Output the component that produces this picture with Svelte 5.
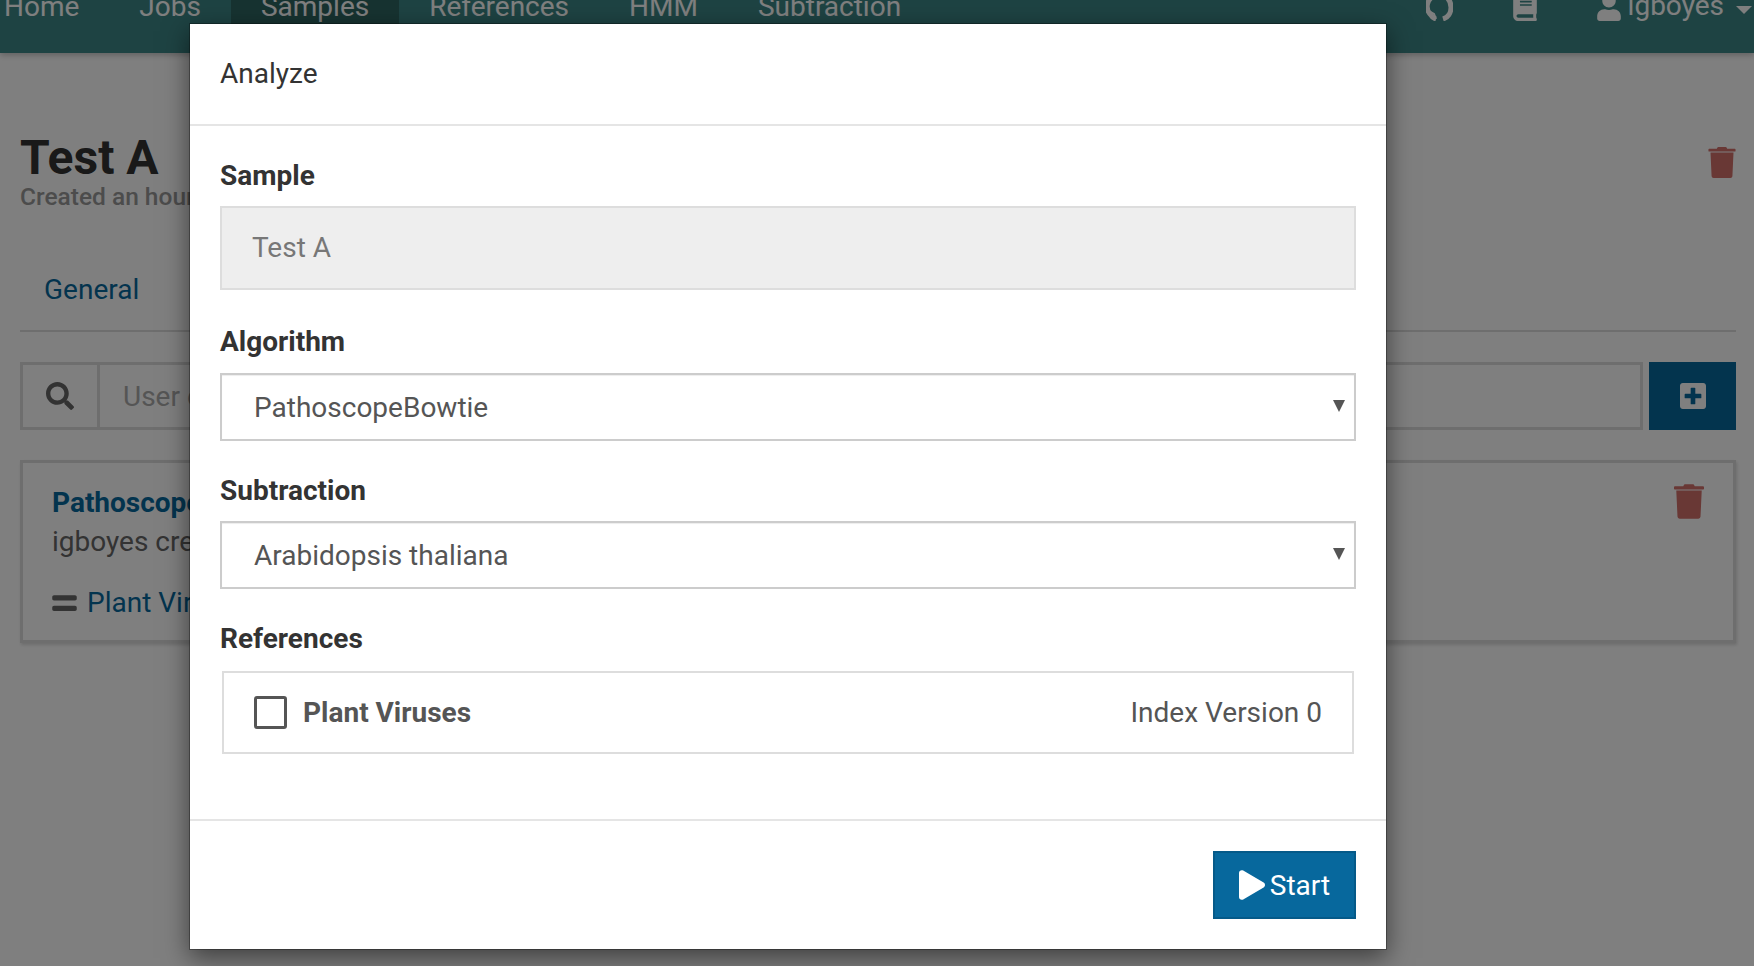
<script>
    const navLinks = ["Home", "Jobs", "Samples", "References", "HMM", "Subtraction"]
    const algorithms = ["PathoscopeBowtie", "NuVs"]
    const subtractions = ["Arabidopsis thaliana"]

    const trash = "M165 0h118c10 0 18 6 21 16l5 14h123c9 0 16 7 16 16v14c0 9-7 16-16 16H16C7 76 0 69 0 60V46c0-9 7-16 16-16h123l5-14c3-10 11-16 21-16zM34 92h380l-18 388c-1 18-16 32-34 32H86c-18 0-33-14-34-32z"
    const search = "M505 442.7L405.3 343c-4.5-4.5-10.6-7-17-7H372c27.6-35.3 44-79.7 44-128C416 93.1 322.9 0 208 0S0 93.1 0 208s93.1 208 208 208c48.3 0 92.7-16.4 128-44v16.3c0 6.4 2.5 12.5 7 17l99.7 99.7c9.4 9.4 24.6 9.4 33.9 0l28.3-28.3c9.4-9.4 9.4-24.6.1-34zM208 336c-70.7 0-128-57.2-128-128 0-70.7 57.2-128 128-128 70.7 0 128 57.2 128 128 0 70.7-57.2 128-128 128z"
    const plusSquare = "M400 32H48C21.5 32 0 53.5 0 80v352c0 26.5 21.5 48 48 48h352c26.5 0 48-21.5 48-48V80c0-26.5-21.5-48-48-48zm-32 252c0 6.6-5.4 12-12 12h-92v92c0 6.6-5.4 12-12 12h-56c-6.6 0-12-5.4-12-12v-92H92c-6.6 0-12-5.4-12-12v-56c0-6.6 5.4-12 12-12h92v-92c0-6.6 5.4-12 12-12h56c6.6 0 12 5.4 12 12v92h92c6.6 0 12 5.4 12 12v56z"
    const play = "M424.4 214.7L72.4 6.6C43.8-10.3 0 6.1 0 47.9V464c0 37.5 40.7 60.1 72.4 41.3l352-208c31.4-18.5 31.5-64.1 0-82.6z"
    const equals = "M416 304H32c-17.67 0-32 14.33-32 32v32c0 17.67 14.33 32 32 32h384c17.67 0 32-14.33 32-32v-32c0-17.67-14.33-32-32-32zm0-192H32c-17.67 0-32 14.33-32 32v32c0 17.67 14.33 32 32 32h384c17.67 0 32-14.33 32-32v-32c0-17.67-14.33-32-32-32z"
    const user = "M224 256c70.7 0 128-57.3 128-128S294.7 0 224 0 96 57.3 96 128s57.3 128 128 128zm89.6 32h-16.7c-22.2 10.2-46.9 16-72.9 16s-50.6-5.8-72.9-16h-16.7C60.2 288 0 348.2 0 422.4V464c0 26.5 21.5 48 48 48h352c26.5 0 48-21.5 48-48v-41.6c0-74.2-60.2-134.4-134.4-134.4z"
    const book = "M448 360V24c0-13.3-10.7-24-24-24H96C43 0 0 43 0 96v320c0 53 43 96 96 96h328c13.3 0 24-10.7 24-24v-16c0-7.5-3.5-14.3-8.9-18.7-4.2-15.4-4.2-59.3 0-74.7 5.4-4.3 8.9-11.1 8.9-18.6zM128 134c0-3.3 2.7-6 6-6h212c3.3 0 6 2.7 6 6v20c0 3.3-2.7 6-6 6H134c-3.3 0-6-2.7-6-6v-20zm0 64c0-3.3 2.7-6 6-6h212c3.3 0 6 2.7 6 6v20c0 3.3-2.7 6-6 6H134c-3.3 0-6-2.7-6-6v-20zm253.4 250H96c-17.7 0-32-14.3-32-32 0-17.6 14.4-32 32-32h285.4c-1.9 17.1-1.9 46.9 0 64z"
</script>

<div class="page">
    <nav class="navbar">
        <ul class="links">
            {#each navLinks as link}
                <li class:active={link === "Samples"}>{link}</li>
            {/each}
        </ul>
        <div class="nav-right">
            <svg class="github" viewBox="0 0 27 27" aria-hidden="true">
                <path d="M8 2A11.5 11.5 0 0 0 4 20C5.5 22.500 8 24.500 10 25M17 25C22 23.500 25 19 25 13.500C25 8 22 4 19 2" fill="none" stroke="currentColor" stroke-width="5" />
                <path d="M3 17L8 20L10 25" fill="none" stroke="currentColor" stroke-width="2" />
            </svg>
            <svg class="book" viewBox="0 0 448 512" aria-hidden="true"><path d={book} /></svg>
            <svg class="user" viewBox="0 0 448 512" aria-hidden="true"><path d={user} /></svg>
            <span class="username">igboyes</span>
            <span class="caret"></span>
        </div>
    </nav>

    <main class="content">
        <div class="title-row">
            <div>
                <h1>Test A</h1>
                <p class="created">Created an hour ago by igboyes</p>
            </div>
            <svg class="trash title-trash" viewBox="0 0 448 512" aria-hidden="true"><path d={trash} /></svg>
        </div>

        <div class="tabs">
            <span>General</span>
            <span>Quality</span>
            <span>Analyses</span>
        </div>

        <div class="toolbar">
            <div class="search-group">
                <span class="search-addon">
                    <svg viewBox="0 0 512 512" aria-hidden="true"><path d={search} /></svg>
                </span>
                <input class="search-input" placeholder="User or reference" />
            </div>
            <button class="add-btn" aria-label="Create">
                <svg viewBox="0 0 448 512" aria-hidden="true"><path d={plusSquare} /></svg>
            </button>
        </div>

        <div class="card">
            <div>
                <a class="card-title" href="#analysis">Pathoscope (Bowtie2)</a>
                <div class="card-meta">igboyes created an hour ago</div>
                <div class="card-ref">
                    <svg viewBox="0 0 448 512" aria-hidden="true"><path d={equals} /></svg>
                    <span>Plant Viruses</span>
                </div>
            </div>
            <svg class="trash card-trash" viewBox="0 0 448 512" aria-hidden="true"><path d={trash} /></svg>
        </div>
    </main>

    <div class="backdrop"></div>

    <div class="modal">
        <header class="modal-header">Analyze</header>

        <div class="modal-body">
            <label for="sample">Sample</label>
            <input id="sample" class="field disabled" value="Test A" disabled />

            <label for="algorithm">Algorithm</label>
            <div class="select-wrap first">
                <select id="algorithm" class="field">
                    {#each algorithms as a}
                        <option>{a}</option>
                    {/each}
                </select>
            </div>

            <label for="subtraction">Subtraction</label>
            <div class="select-wrap">
                <select id="subtraction" class="field">
                    {#each subtractions as s}
                        <option>{s}</option>
                    {/each}
                </select>
            </div>

            <div class="group-label">References</div>
            <div class="ref-item">
                <span class="checkbox"></span>
                <strong>Plant Viruses</strong>
                <span class="version">Index Version 0</span>
            </div>
        </div>

        <footer class="modal-footer">
            <button class="start">
                <svg viewBox="0 0 448 512" aria-hidden="true"><path d={play} /></svg>
                <span>Start</span>
            </button>
        </footer>
    </div>
</div>

<style>
    :global(body) {
        margin: 0;
        background: #fff;
    }
    .page {
        position: relative;
        height: 966px;
        overflow: hidden;
        font-family: Roboto, "Liberation Sans", sans-serif;
        font-size: 28px;
        color: #333;
    }

    /* navbar, page is scrolled so the top is cut off */
    .navbar {
        display: flex;
        justify-content: space-between;
        height: 53px;
        background: #3c8786;
        color: #fff;
        box-shadow: 0 2px 6px rgba(0, 0, 0, 0.25);
    }
    .links {
        display: flex;
        list-style: none;
        margin: -20px 0 0 -26px;
        padding: 0;
    }
    .links li {
        height: 44px;
        line-height: 53px;
        padding: 0 30px;
        font-size: 28px;
    }
    .links li.active {
        background: #2f6663;
    }
    .nav-right {
        display: flex;
        align-items: flex-start;
        margin-top: -6px;
        padding-right: 2px;
    }
    .nav-right svg {
        fill: currentColor;
    }
    .github {
        width: 27px;
        height: 27px;
    }
    .book {
        width: 26px;
        height: 27px;
        margin-left: 59px;
    }
    .user {
        width: 26px;
        height: 27px;
        margin-left: 58px;
    }
    .username {
        margin-left: 6px;
        font-size: 28px;
        line-height: 27px;
        margin-top: -2px;
    }
    .caret {
        width: 0;
        height: 0;
        margin: 12px 0 0 12px;
        border-left: 8px solid transparent;
        border-right: 8px solid transparent;
        border-top: 8px solid #fff;
    }

    .content {
        padding: 0 18px 0 20px;
    }
    .title-row {
        display: flex;
        justify-content: space-between;
        padding-top: 79px;
    }
    h1 {
        margin: 0;
        font-size: 48px;
        line-height: 52px;
        font-weight: 700;
        color: #333;
    }
    .created {
        margin: -2px 0 0;
        font-size: 24.5px;
        line-height: 30px;
        font-weight: 500;
        color: #999;
    }
    .trash {
        fill: #d2706a;
    }
    .title-trash {
        width: 28px;
        height: 31px;
        margin: 15px 0 0;
    }
    .card-trash {
        width: 30px;
        height: 35px;
        margin-top: -1px;
    }
    .tabs {
        display: flex;
        gap: 60px;
        margin-top: 43px;
        padding: 0 24px;
        height: 75px;
        line-height: 70px;
        border-bottom: 2px solid #ddd;
        color: #07689d;
        font-size: 28px;
    }
    .toolbar {
        display: flex;
        gap: 6px;
        margin-top: 30px;
        height: 68px;
    }
    .search-group {
        flex: 1;
        display: flex;
        border: 3px solid #ddd;
    }
    .search-addon {
        display: flex;
        align-items: center;
        justify-content: center;
        width: 74px;
        border-right: 3px solid #ddd;
    }
    .search-addon svg {
        width: 28px;
        height: 28px;
        fill: #666;
    }
    .search-input {
        flex: 1;
        border: 0;
        background: transparent;
        padding: 0 23px;
        font: inherit;
    }
    .search-input::placeholder {
        color: #aaa;
    }
    .add-btn {
        width: 87px;
        border: 0;
        padding: 0;
        background: #07689d;
        display: flex;
        align-items: center;
        justify-content: center;
    }
    .add-btn svg {
        width: 26px;
        height: 30px;
        fill: #fff;
    }
    .card {
        display: flex;
        justify-content: space-between;
        margin-top: 30px;
        height: 183px;
        box-sizing: border-box;
        padding: 22px 29px 0 29px;
        border: 3px solid #ddd;
        box-shadow: 1px 2px 3px rgba(0, 0, 0, 0.15);
    }
    .card-title {
        color: #07689d;
        font-weight: 700;
        text-decoration: none;
        line-height: 36px;
    }
    .card-meta {
        line-height: 42px;
        color: #666;
    }
    .card-ref {
        display: flex;
        align-items: center;
        gap: 10px;
        margin-top: 20px;
        line-height: 40px;
        color: #07689d;
    }
    .card-ref svg {
        width: 25px;
        height: 28px;
        fill: #666;
    }

    .backdrop {
        position: absolute;
        inset: 0;
        background: rgba(0, 0, 0, 0.5);
    }

    .modal {
        position: absolute;
        left: 189px;
        top: 23px;
        width: 1198px;
        height: 927px;
        box-sizing: border-box;
        background: #fff;
        border: 1px solid rgba(0, 0, 0, 0.3);
        background-clip: padding-box;
        box-shadow: 0 8px 24px rgba(0, 0, 0, 0.5);
        display: flex;
        flex-direction: column;
    }
    .modal-header {
        height: 100px;
        box-sizing: content-box;
        line-height: 100px;
        padding: 0 30px;
        border-bottom: 2px solid #e5e5e5;
    }
    .modal-body {
        flex: 1;
        padding: 30px 30px 0;
    }
    label,
    .group-label {
        display: block;
        font-weight: 700;
        font-size: 28px;
        line-height: 40px;
        color: #333;
        margin-bottom: 10px;
    }
    .group-label {
        margin-bottom: 12px;
    }
    .field {
        display: block;
        width: 100%;
        box-sizing: border-box;
        margin: 0 0 30px;
        font: inherit;
        color: #555;
        background: #fff;
        border: 2px solid #ccc;
        border-radius: 0;
        appearance: none;
        box-shadow: inset 0 1px 1px rgba(0, 0, 0, 0.075);
    }
    input.field.disabled {
        height: 84px;
        margin-bottom: 32px;
        padding: 0 30px 2px;
        background: #eee;
        border-color: #ddd;
        color: #777;
        box-shadow: none;
    }
    select.field {
        height: 68px;
        padding: 0 32px;
    }
    .select-wrap {
        position: relative;
    }
    .select-wrap.first {
        margin-top: 11px;
    }
    .select-wrap::after {
        content: "";
        position: absolute;
        right: 11px;
        top: 27px;
        border-left: 6px solid transparent;
        border-right: 6px solid transparent;
        border-top: 12px solid #555;
    }
    .ref-item {
        display: flex;
        align-items: center;
        height: 83px;
        box-sizing: border-box;
        margin: 0 2px;
        padding: 0 30px;
        border: 2px solid #ddd;
        color: #555;
    }
    .checkbox {
        width: 33px;
        height: 33px;
        box-sizing: border-box;
        border: 3px solid #555;
        border-radius: 3px;
        margin-right: 16px;
    }
    .version {
        margin-left: auto;
    }
    .modal-footer {
        display: flex;
        justify-content: flex-end;
        height: 130px;
        box-sizing: border-box;
        padding: 30px 30px 0;
        border-top: 2px solid #e5e5e5;
    }
    .start {
        display: flex;
        align-items: center;
        justify-content: center;
        gap: 5px;
        width: 143px;
        height: 68px;
        padding: 0;
        background: #07689d;
        border: 2px solid #055a89;
        color: #fff;
        font: inherit;
    }
    .start svg {
        width: 26px;
        height: 30px;
        fill: #fff;
    }
</style>
